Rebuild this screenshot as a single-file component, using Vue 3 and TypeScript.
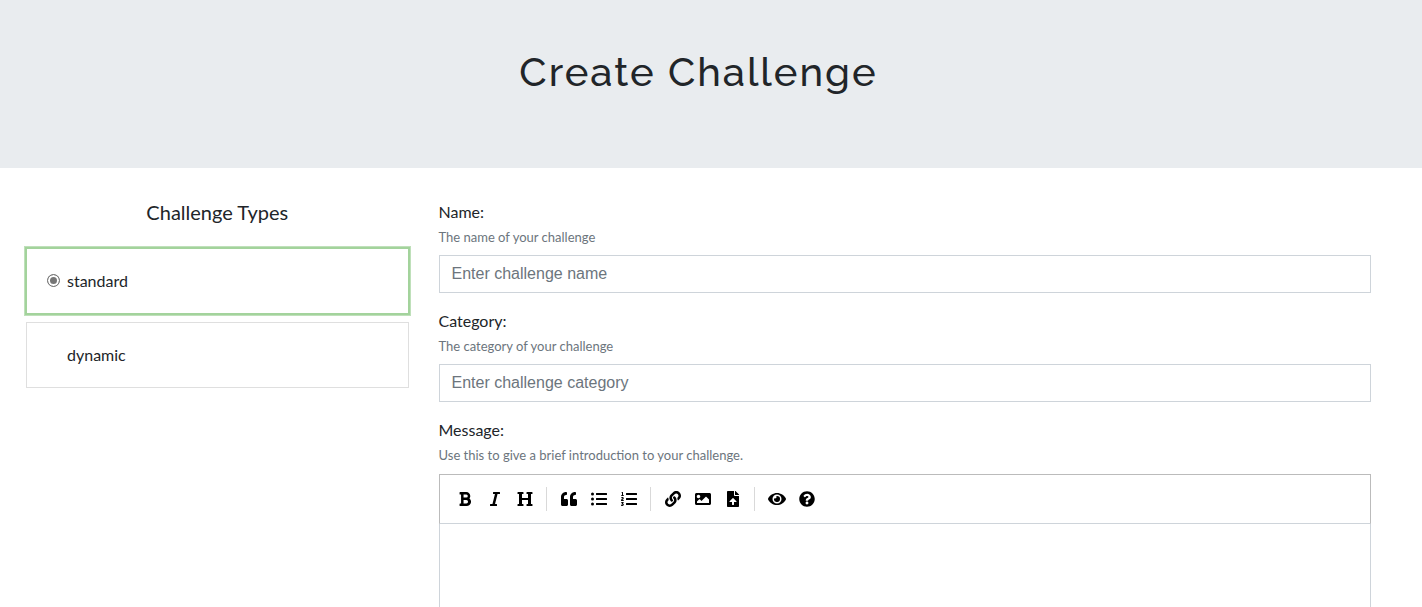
<script setup lang="ts">
import { ref } from 'vue'

interface Tool { label: string; width: number; path: string }

const types = ['standard', 'dynamic']
const selected = ref('standard')
const name = ref('')
const category = ref('')
const message = ref('')

const groups: Tool[][] = [
  [
    { label: 'Bold', width: 384, path: 'M333.49 238a122 122 0 0 0 27-65.21C367.87 96.49 308 32 233.42 32H34a16 16 0 0 0-16 16v48a16 16 0 0 0 16 16h31.87v288H34a16 16 0 0 0-16 16v48a16 16 0 0 0 16 16h209.32c70.8 0 134.14-51.75 141-122.4 4.74-48.45-16.39-92.06-50.83-119.6zM145.66 112h87.76a48 48 0 0 1 0 96h-87.76zm87.76 288h-87.76V288h87.76a56 56 0 0 1 0 112z' },
    { label: 'Italic', width: 320, path: 'M320 48v32a16 16 0 0 1-16 16h-62.76l-80 320H208a16 16 0 0 1 16 16v32a16 16 0 0 1-16 16H16a16 16 0 0 1-16-16v-32a16 16 0 0 1 16-16h62.76l80-320H112a16 16 0 0 1-16-16V48a16 16 0 0 1 16-16h192a16 16 0 0 1 16 16z' },
    { label: 'Heading', width: 512, path: 'M448 96v320h32a16 16 0 0 1 16 16v32a16 16 0 0 1-16 16H320a16 16 0 0 1-16-16v-32a16 16 0 0 1 16-16h32V288H160v128h32a16 16 0 0 1 16 16v32a16 16 0 0 1-16 16H32a16 16 0 0 1-16-16v-32a16 16 0 0 1 16-16h32V96H32a16 16 0 0 1-16-16V48a16 16 0 0 1 16-16h160a16 16 0 0 1 16 16v32a16 16 0 0 1-16 16h-32v128h192V96h-32a16 16 0 0 1-16-16V48a16 16 0 0 1 16-16h160a16 16 0 0 1 16 16v32a16 16 0 0 1-16 16z' },
  ],
  [
    { label: 'Quote', width: 512, path: 'M464 256h-80v-64c0-35.3 28.7-64 64-64h8c13.3 0 24-10.7 24-24V56c0-13.3-10.7-24-24-24h-8c-88.4 0-160 71.6-160 160v240c0 26.5 21.5 48 48 48h128c26.5 0 48-21.5 48-48V304c0-26.5-21.5-48-48-48zm-288 0H96v-64c0-35.3 28.7-64 64-64h8c13.3 0 24-10.7 24-24V56c0-13.3-10.7-24-24-24h-8C71.6 32 0 103.6 0 192v240c0 26.5 21.5 48 48 48h128c26.5 0 48-21.5 48-48V304c0-26.5-21.5-48-48-48z' },
    { label: 'Generic List', width: 512, path: 'M48 48a48 48 0 1 0 48 48 48 48 0 0 0-48-48zm0 160a48 48 0 1 0 48 48 48 48 0 0 0-48-48zm0 160a48 48 0 1 0 48 48 48 48 0 0 0-48-48zm448 16H176a16 16 0 0 0-16 16v32a16 16 0 0 0 16 16h320a16 16 0 0 0 16-16v-32a16 16 0 0 0-16-16zm0-320H176a16 16 0 0 0-16 16v32a16 16 0 0 0 16 16h320a16 16 0 0 0 16-16V80a16 16 0 0 0-16-16zm0 160H176a16 16 0 0 0-16 16v32a16 16 0 0 0 16 16h320a16 16 0 0 0 16-16v-32a16 16 0 0 0-16-16z' },
    { label: 'Numbered List', width: 512, path: 'M61.77 401l17.5-20.15a19.92 19.92 0 0 0 5.07-14.19v-3.31C84.34 356 80.5 352 73 352H16a8 8 0 0 0-8 8v16a8 8 0 0 0 8 8h22.83a157.41 157.41 0 0 0-11 12.31l-5.61 7c-4 5.07-5.25 10.13-2.8 14.88l1.05 1.93c3 5.76 6.29 7.88 12.25 7.88h4.73c10.33 0 15.94 2.44 15.94 9.09 0 4.72-4.2 8.22-14.36 8.22a41.54 41.54 0 0 1-15.47-3.12c-6.49-3.88-11.74-3.5-15.6 3.12l-5.59 9.31c-3.72 6.13-3.19 11.72 2.63 15.94 7.71 4.69 20.38 9.44 37 9.44 34.16 0 48.5-22.75 48.5-44.12-.03-14.38-9.12-29.76-28.73-34.88zM496 224H176a16 16 0 0 0-16 16v32a16 16 0 0 0 16 16h320a16 16 0 0 0 16-16v-32a16 16 0 0 0-16-16zm0-160H176a16 16 0 0 0-16 16v32a16 16 0 0 0 16 16h320a16 16 0 0 0 16-16V80a16 16 0 0 0-16-16zm0 320H176a16 16 0 0 0-16 16v32a16 16 0 0 0 16 16h320a16 16 0 0 0 16-16v-32a16 16 0 0 0-16-16zM16 160h64a8 8 0 0 0 8-8v-16a8 8 0 0 0-8-8H64V40a8 8 0 0 0-8-8H32a8 8 0 0 0-7.14 4.42l-8 16A8 8 0 0 0 24 64h8v64H16a8 8 0 0 0-8 8v16a8 8 0 0 0 8 8zm-3.91 160H80a8 8 0 0 0 8-8v-16a8 8 0 0 0-8-8H41.32c3.29-10.29 48.34-18.68 48.34-56.44 0-29.06-25-39.56-44.47-39.56-21.36 0-33.8 10-40.46 18.75-4.37 5.59-3 10.84 2.8 15.37l8.58 6.88c5.61 4.56 11 2.47 16.12-2.44a13.44 13.44 0 0 1 9.46-3.84c3.33 0 9.28 1.56 9.28 8.75C51 248.19 0 257.31 0 304.59v4C0 316 5.08 320 12.09 320z' },
  ],
  [
    { label: 'Create Link', width: 512, path: 'M326.612 185.391c59.747 59.809 58.927 155.698.36 214.59-.11.12-.24.25-.36.37l-67.2 67.2c-59.27 59.27-155.699 59.262-214.96 0-59.27-59.26-59.27-155.7 0-214.96l37.106-37.106c9.84-9.84 26.786-3.3 27.294 10.606.648 17.722 3.826 35.527 9.69 52.721 1.986 5.822.567 12.262-3.783 16.612l-13.087 13.087c-28.026 28.026-28.905 73.66-1.155 101.96 28.024 28.579 74.086 28.749 102.325.51l67.2-67.19c28.191-28.191 28.073-73.757 0-101.83-3.701-3.694-7.429-6.564-10.341-8.569a16.037 16.037 0 0 1-6.947-12.606c-.396-10.567 3.348-21.456 11.698-29.806l21.054-21.055c5.521-5.521 14.182-6.199 20.584-1.731a152.482 152.482 0 0 1 20.522 17.197zM467.547 44.449c-59.261-59.262-155.69-59.27-214.96 0l-67.2 67.2c-.12.12-.25.25-.36.37-58.566 58.892-59.387 154.781.36 214.59a152.454 152.454 0 0 0 20.521 17.196c6.402 4.468 15.064 3.789 20.584-1.731l21.054-21.055c8.35-8.35 12.094-19.239 11.698-29.806a16.037 16.037 0 0 0-6.947-12.606c-2.912-2.005-6.64-4.875-10.341-8.569-28.073-28.073-28.191-73.639 0-101.83l67.2-67.19c28.239-28.239 74.3-28.069 102.325.51 27.75 28.3 26.872 73.934-1.155 101.96l-13.087 13.087c-4.35 4.35-5.769 10.79-3.783 16.612 5.864 17.194 9.042 34.999 9.69 52.721.509 13.906 17.454 20.446 27.294 10.606l37.106-37.106c59.271-59.259 59.271-155.699.001-214.959z' },
    { label: 'Insert Image', width: 512, path: 'M464 448H48c-26.51 0-48-21.49-48-48V112c0-26.51 21.49-48 48-48h416c26.51 0 48 21.49 48 48v288c0 26.51-21.49 48-48 48zM112 120c-30.928 0-56 25.072-56 56s25.072 56 56 56 56-25.072 56-56-25.072-56-56-56zM64 384h384V272l-87.515-87.515c-4.686-4.686-12.284-4.686-16.971 0L208 320l-55.515-55.515c-4.686-4.686-12.284-4.686-16.971 0L64 336v48z' },
    { label: 'Media Library', width: 384, path: 'M224 136V0H24C10.7 0 0 10.7 0 24v464c0 13.3 10.7 24 24 24h336c13.3 0 24-10.7 24-24V160H248c-13.2 0-24-10.8-24-24zm65.18 216.01H224v80c0 8.84-7.16 16-16 16h-32c-8.84 0-16-7.16-16-16v-80H94.82c-14.28 0-21.41-17.29-11.27-27.36l96.42-95.7c6.65-6.61 17.39-6.61 24.04 0l96.42 95.7c10.15 10.07 3.03 27.36-11.25 27.36zM377 105L279.1 7c-4.5-4.5-10.6-7-17-7H256v128h128v-6.1c0-6.3-2.5-12.4-7-16.9z' },
  ],
  [
    { label: 'Toggle Preview', width: 576, path: 'M572.52 241.4C518.29 135.59 410.93 64 288 64S57.68 135.64 3.48 241.41a32.35 32.35 0 0 0 0 29.19C57.71 376.41 165.07 448 288 448s230.32-71.64 284.52-177.41a32.35 32.35 0 0 0 0-29.19zM288 400a144 144 0 1 1 144-144 143.93 143.93 0 0 1-144 144zm0-240a95.31 95.31 0 0 0-25.31 3.79 47.85 47.85 0 0 1-66.9 66.9A95.78 95.78 0 1 0 288 160z' },
    { label: 'Markdown Guide', width: 512, path: 'M504 256c0 136.997-111.043 248-248 248S8 392.997 8 256C8 119.083 119.043 8 256 8s248 111.083 248 248zM262.655 90c-54.497 0-89.255 22.957-116.549 63.758-3.536 5.286-2.353 12.415 2.715 16.258l34.699 26.31c5.205 3.947 12.621 3.008 16.665-2.122 17.864-22.658 30.113-35.797 57.303-35.797 20.429 0 45.698 13.148 45.698 32.958 0 14.976-12.363 22.667-32.534 33.976C247.128 238.528 216 254.941 216 296v4c0 6.627 5.373 12 12 12h56c6.627 0 12-5.373 12-12v-1.333c0-28.462 83.186-29.647 83.186-106.667 0-58.002-60.165-102-116.531-102zM256 338c-25.365 0-46 20.635-46 46 0 25.364 20.635 46 46 46s46-20.636 46-46c0-25.365-20.635-46-46-46z' },
  ],
]
</script>

<template>
  <div class="page">
    <header class="banner"><h1>Create Challenge</h1></header>
    <main class="content">
      <section class="types">
        <h2 id="types-title">Challenge Types</h2>
        <div class="cards" role="radiogroup" aria-labelledby="types-title">
          <label v-for="t in types" :key="t" class="card" :class="{ active: selected === t }">
            <input v-model="selected" type="radio" name="type" :value="t">
            <span>{{ t }}</span>
          </label>
        </div>
      </section>
      <form class="form" @submit.prevent>
        <div class="group">
          <label for="name">Name:</label>
          <small id="name-help">The name of your challenge</small>
          <input id="name" v-model="name" type="text" placeholder="Enter challenge name" aria-describedby="name-help">
        </div>
        <div class="group">
          <label for="category">Category:</label>
          <small id="category-help">The category of your challenge</small>
          <input id="category" v-model="category" type="text" placeholder="Enter challenge category" aria-describedby="category-help">
        </div>
        <div class="group">
          <label for="message">Message:</label>
          <small id="message-help">Use this to give a brief introduction to your challenge.</small>
          <div class="editor">
            <div class="toolbar" role="toolbar" aria-label="Formatting">
              <div v-for="(g, i) in groups" :key="i" class="tools">
                <button v-for="t in g" :key="t.label" type="button" :title="t.label" :aria-label="t.label">
                  <svg :viewBox="`0 0 ${t.width} 512`" aria-hidden="true"><path :d="t.path" /></svg>
                </button>
              </div>
            </div>
            <textarea id="message" v-model="message" rows="12" aria-describedby="message-help"></textarea>
          </div>
        </div>
      </form>
    </main>
  </div>
</template>

<style>
html, body { margin: 0; background: #fff; }
body { overflow: hidden; }
</style>

<style scoped>
.page, .page * { box-sizing: border-box; }
.page {
  height: 100vh;
  overflow: hidden;
  font-family: Lato, "Liberation Sans", sans-serif;
  font-size: 16px;
  line-height: 24px;
  color: #212529;
}
.banner {
  padding: 48px 25px 72px 0;
  background: #e9ecef;
  text-align: center;
}
h1 {
  margin: 0;
  font-family: Raleway, Lato, sans-serif;
  font-size: 40px;
  font-weight: 500;
  line-height: 48px;
  letter-spacing: 2px;
}
.content {
  display: grid;
  grid-template-columns: 3fr 7fr;
  padding: 32px 36px 0 11px;
}
.types, .form { min-width: 0; padding: 0 15px; }
h2 {
  margin: 0 0 24px;
  font-size: 20px;
  font-weight: 400;
  line-height: 24px;
  text-align: center;
}
.cards { display: grid; gap: 8px; }
.card {
  display: flex;
  align-items: center;
  padding: 20px;
  border: 1px solid #dfdfdf;
}
.card.active { border-color: #a3d39c; box-shadow: 0 0 0 1px #a3d39c, 0 0 0 2px #bfe0ba; }
.card input {
  appearance: none;
  width: 13px;
  height: 13px;
  margin: 0 7px 2px 0;
  border: 1px solid #767676;
  border-radius: 50%;
  background: #767676;
  box-shadow: inset 0 0 0 2px #fff;
  visibility: hidden;
}
.card.active input { visibility: visible; }
.group { display: flex; flex-direction: column; margin-bottom: 16px; }
.group small {
  margin: 4px 0 8px;
  font-size: 13px;
  line-height: 19px;
  color: #6c757d;
}
.group input {
  width: 100%;
  height: 38px;
  padding: 6px 12px;
  border: 1px solid #ced4da;
  border-radius: 0;
  font: 16px/24px "Liberation Sans", Arial, sans-serif;
}
.group input::placeholder { color: #6c757d; opacity: 1; }
.editor { margin-top: 1px; }
.toolbar {
  display: flex;
  align-items: center;
  padding: 12px 10px;
  border: 1px solid #bbb;
  border-bottom-color: #ced4da;
}
.tools { display: flex; align-items: center; height: 24px; }
.tools + .tools { margin-left: 6px; padding-left: 7px; border-left: 1px solid #d9d9d9; }
.tools button {
  display: grid;
  place-items: center;
  width: 30px;
  height: 30px;
  padding: 0;
  border: 0;
  background: none;
}
svg { display: block; height: 16px; fill: #000; }
textarea {
  display: block;
  width: 100%;
  padding: 10px;
  border: 1px solid #ced4da;
  border-top: 0;
  resize: none;
  font: inherit;
}
</style>
